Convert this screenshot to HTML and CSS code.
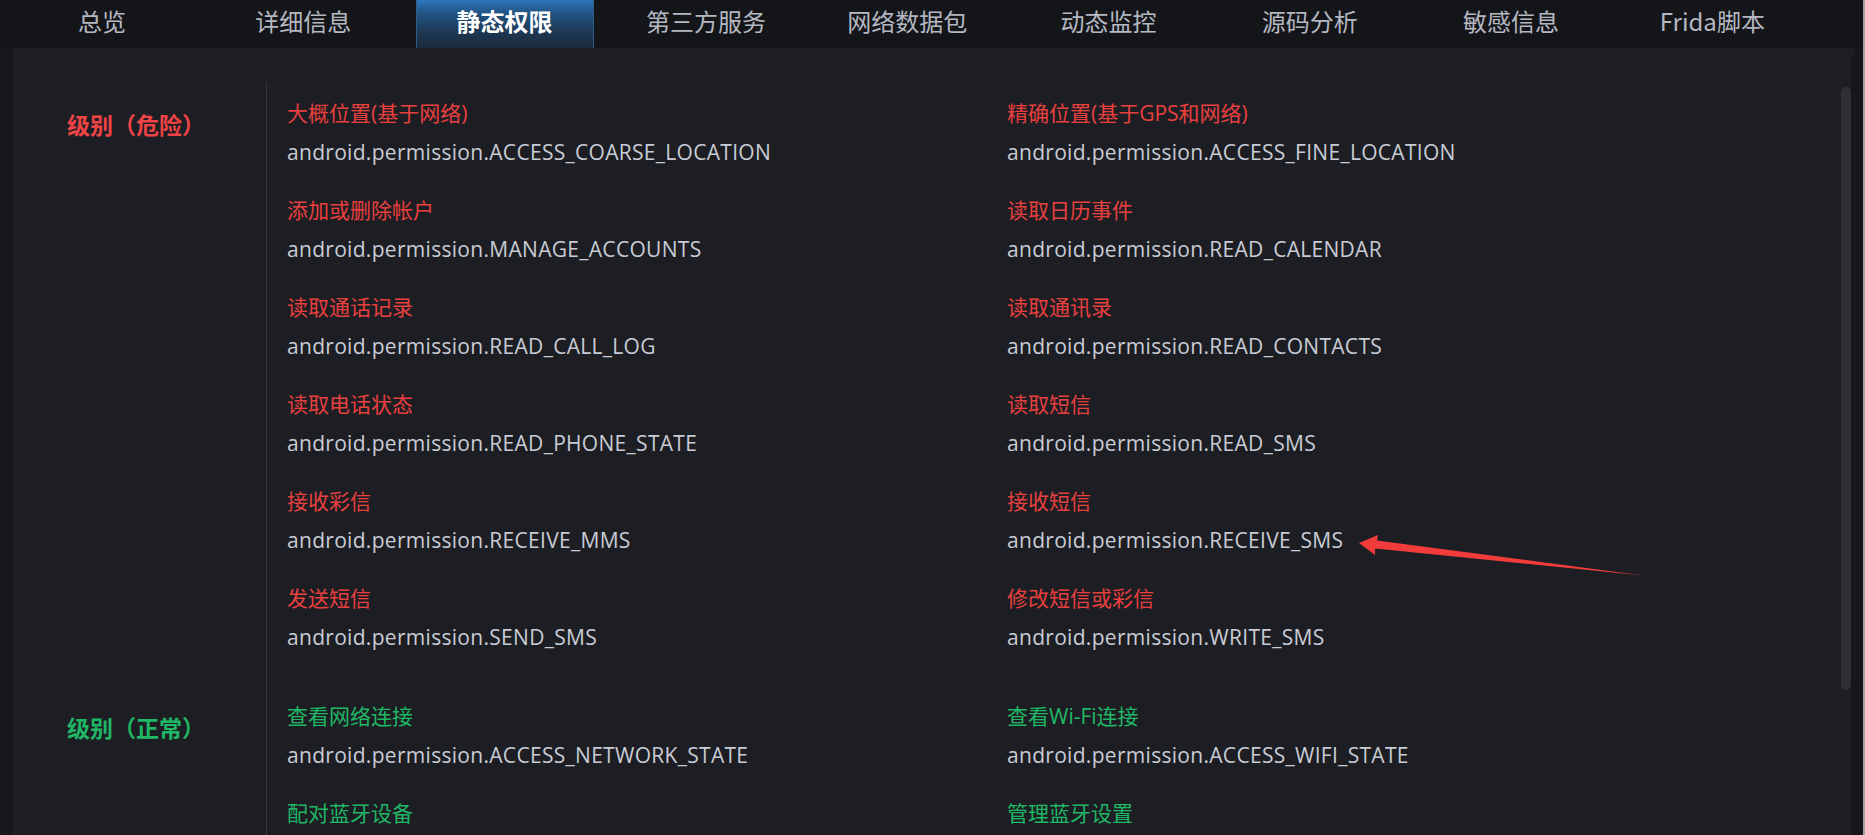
FILE: index.html
```html
<!DOCTYPE html>
<html lang="zh-CN">
<head>
<meta charset="utf-8">
<title>静态权限</title>
<link rel="stylesheet" href="styles.css">
</head>
<body>
<div class="app">
  <nav class="tabs">
    <div class="tab">总览</div>
    <div class="tab">详细信息</div>
    <div class="tab active">静态权限</div>
    <div class="tab">第三方服务</div>
    <div class="tab">网络数据包</div>
    <div class="tab">动态监控</div>
    <div class="tab">源码分析</div>
    <div class="tab">敏感信息</div>
    <div class="tab">Frida脚本</div>
  </nav>
  <main class="panel">
    <section class="section danger">
      <div class="level">级别（危险）</div>
      <div class="items">
        <div class="item"><div class="name">大概位置(基于网络)</div><div class="perm">android.permission.ACCESS_COARSE_LOCATION</div></div>
        <div class="item"><div class="name">精确位置(基于GPS和网络)</div><div class="perm">android.permission.ACCESS_FINE_LOCATION</div></div>
        <div class="item"><div class="name">添加或删除帐户</div><div class="perm">android.permission.MANAGE_ACCOUNTS</div></div>
        <div class="item"><div class="name">读取日历事件</div><div class="perm">android.permission.READ_CALENDAR</div></div>
        <div class="item"><div class="name">读取通话记录</div><div class="perm">android.permission.READ_CALL_LOG</div></div>
        <div class="item"><div class="name">读取通讯录</div><div class="perm">android.permission.READ_CONTACTS</div></div>
        <div class="item"><div class="name">读取电话状态</div><div class="perm">android.permission.READ_PHONE_STATE</div></div>
        <div class="item"><div class="name">读取短信</div><div class="perm">android.permission.READ_SMS</div></div>
        <div class="item"><div class="name">接收彩信</div><div class="perm">android.permission.RECEIVE_MMS</div></div>
        <div class="item"><div class="name">接收短信</div><div class="perm">android.permission.RECEIVE_SMS</div></div>
        <div class="item"><div class="name">发送短信</div><div class="perm">android.permission.SEND_SMS</div></div>
        <div class="item"><div class="name">修改短信或彩信</div><div class="perm">android.permission.WRITE_SMS</div></div>
      </div>
    </section>
    <section class="section normal">
      <div class="level">级别（正常）</div>
      <div class="items">
        <div class="item"><div class="name">查看网络连接</div><div class="perm">android.permission.ACCESS_NETWORK_STATE</div></div>
        <div class="item"><div class="name">查看Wi-Fi连接</div><div class="perm">android.permission.ACCESS_WIFI_STATE</div></div>
        <div class="item"><div class="name">配对蓝牙设备</div><div class="perm">android.permission.BLUETOOTH</div></div>
        <div class="item"><div class="name">管理蓝牙设置</div><div class="perm">android.permission.BLUETOOTH_ADMIN</div></div>
      </div>
    </section>
    <div class="scroll-track"></div>
    <div class="scroll-thumb"></div>
  </main>
  <div class="edge"></div>
</div>
<svg class="arrow" width="300" height="50" viewBox="1350 530 300 50" xmlns="http://www.w3.org/2000/svg">
  <polygon points="1359,543 1378,535 1377,540.5 1643,575.5 1375,548.5 1375,555" fill="#f23c3c"/>
</svg>
</body>
</html>
```
FILE: styles.css
```css
html, body {
  margin: 0;
  padding: 0;
  width: 1865px;
  height: 835px;
  overflow: hidden;
  background: #17181c;
  font-family: "Open Sans", "Noto Sans CJK SC", sans-serif;
}

.app {
  position: relative;
  width: 1865px;
  height: 835px;
  display: flex;
  flex-direction: column;
}

.tabs {
  display: flex;
  gap: 23.3px;
  height: 48px;
  padding-left: 13px;
  background: #141519;
  flex: none;
}

.tab {
  width: 178px;
  height: 48px;
  line-height: 41px;
  text-align: center;
  font-family: "Noto Sans CJK SC", sans-serif;
  font-size: 24px;
  color: #b4b8c1;
  box-sizing: border-box;
}

.tab.active {
  color: #ffffff;
  font-weight: 700;
  background: linear-gradient(180deg, #2c76bd 0%, #21517f 30%, #1d3650 70%, #1c2b3d 100%);
  border-left: 1px solid #2f5d8a;
  border-right: 1px solid #2f5d8a;
}

.panel {
  position: relative;
  margin-left: 13px;
  width: 1842px;
  flex: 1;
  background: #1d1e23;
  padding-top: 34px;
  box-sizing: border-box;
  overflow: hidden;
}

.section {
  display: flex;
}

.level {
  width: 253px;
  flex: none;
  box-sizing: border-box;
  padding-left: 54px;
  padding-top: 27px;
  font-family: "Noto Sans CJK SC", sans-serif;
  font-size: 23px;
  font-weight: 700;
  line-height: 30px;
}

.danger .level { color: #ee4446; }
.normal .level { color: #1fb765; }

.items {
  border-left: 1px solid #34353b;
  padding: 16px 0 33px 20px;
  display: grid;
  grid-template-columns: 720px 720px;
  row-gap: 28px;
}

.name {
  font-size: 21px;
  line-height: 30px;
  height: 30px;
  margin-bottom: 9px;
}

.danger .name { color: #e8403f; }
.normal .name { color: #1fb765; }

.perm {
  font-size: 21px;
  letter-spacing: 0.3px;
  line-height: 30px;
  height: 30px;
  color: #c9ccd5;
}

.scroll-track {
  position: absolute;
  top: 9px;
  right: 0;
  width: 4px;
  bottom: 0;
  background: #16171b;
}

.scroll-thumb {
  position: absolute;
  top: 39px;
  left: 1828px;
  width: 10px;
  height: 603px;
  border-radius: 5px;
  background: #2d2f35;
}

.edge {
  position: absolute;
  top: 0;
  right: 0;
  width: 2px;
  height: 835px;
  background: #a3a3a3;
}

.arrow {
  position: absolute;
  left: 1350px;
  top: 530px;
}
```
